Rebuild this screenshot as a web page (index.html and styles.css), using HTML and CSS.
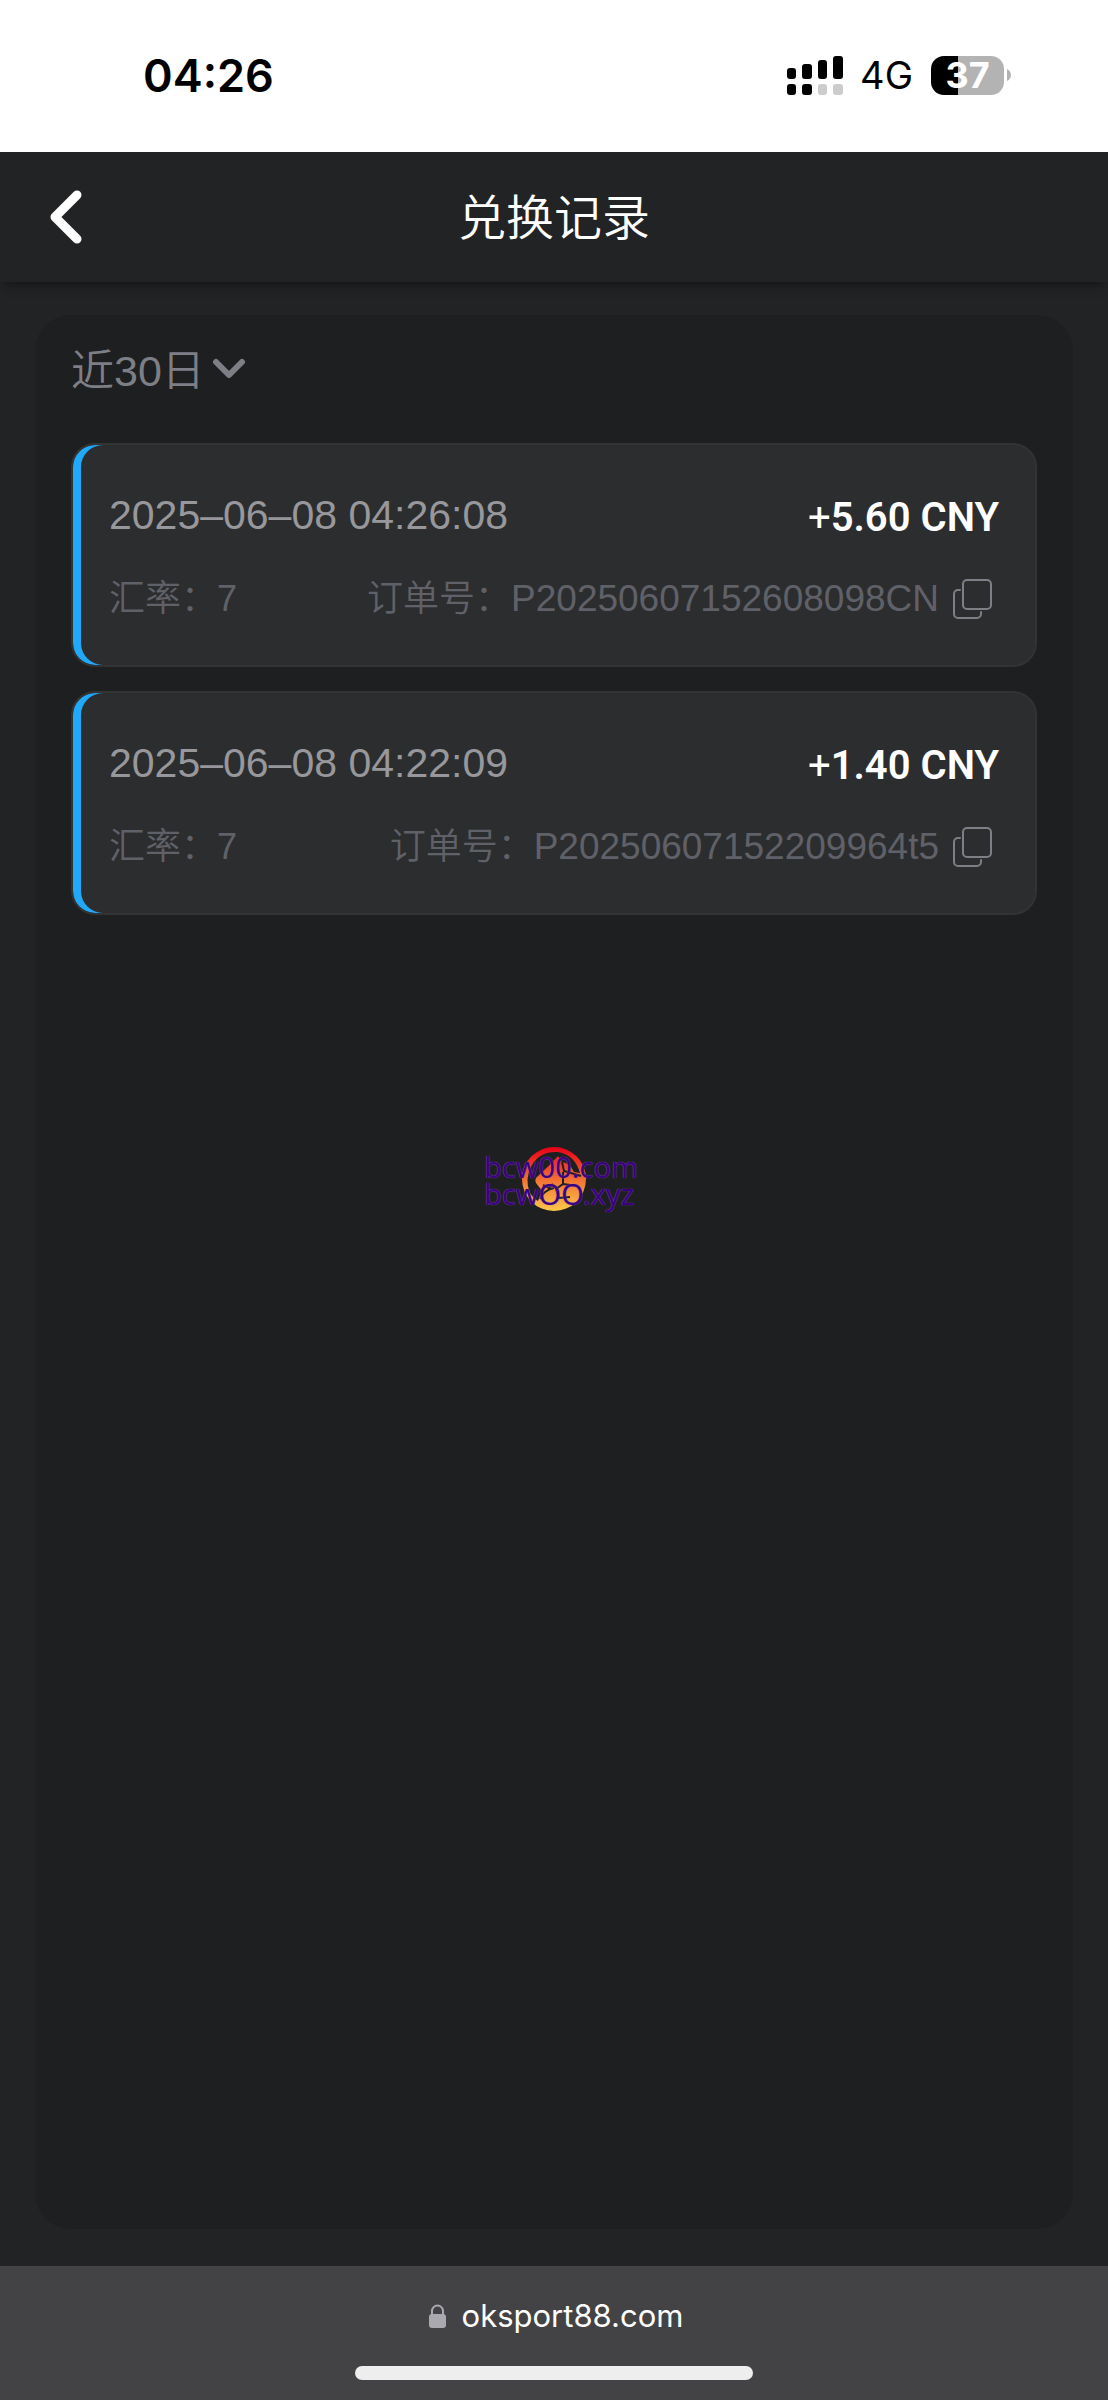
FILE: index.html
```html
<!DOCTYPE html>
<html lang="zh-CN">
<head>
<meta charset="utf-8">
<meta name="viewport" content="width=device-width, initial-scale=1">
<title>兑换记录</title>
<link rel="stylesheet" href="styles.css">
</head>
<body>
<div class="status">
  <span class="status-time">04:26</span>
  <div class="status-right">
    <svg class="signal" viewBox="0 0 56 39" aria-hidden="true">
      <rect x="0" y="12" width="9" height="11" rx="3"/>
      <rect x="15" y="8" width="10" height="15" rx="3"/>
      <rect x="31" y="4" width="9" height="19" rx="3"/>
      <rect x="46" y="0" width="10" height="23" rx="3"/>
      <rect x="0" y="28" width="9" height="11" rx="3"/>
      <rect x="15" y="28" width="10" height="11" rx="3"/>
      <rect class="signal-off" x="31" y="28" width="9" height="11" rx="3"/>
      <rect class="signal-off" x="46" y="28" width="10" height="11" rx="3"/>
    </svg>
    <span class="network">4G</span>
    <div class="battery">
      <span class="battery-body" style="--level: 37%">37</span>
      <svg class="battery-tip" viewBox="0 0 4 12" aria-hidden="true"><path d="M0 0Q4 2 4 6T0 12Z"/></svg>
    </div>
  </div>
</div>

<header class="header">
  <button class="back" type="button" aria-label="返回">
    <svg viewBox="0 0 32 54" aria-hidden="true"><path d="M27 5 5 27 27 49"/></svg>
  </button>
  <h1 class="title">兑换记录</h1>
</header>

<main class="main">
  <section class="panel">
    <label class="filter">
      <select class="filter-select" aria-label="时间范围"><option>近30日</option></select>
      <svg class="filter-arrow" viewBox="0 0 34 22" aria-hidden="true"><path d="M4 4 17 17 30 4"/></svg>
    </label>

    <ul class="records">
      <li class="record">
        <div class="row">
          <time class="date">2025–06–08 04:26:08</time>
          <strong class="amount"><span class="sign">+</span>5.60 CNY</strong>
        </div>
        <div class="row detail">
          <span>汇率：7</span>
          <span class="order">
            <span>订单号：<span class="number">P20250607152608098CN</span></span>
            <button class="copy" type="button" aria-label="复制"><svg viewBox="0 0 42 42" aria-hidden="true"><rect x="12" y="2" width="28" height="29" rx="4"/><path d="M9 12H7a4 4 0 0 0-4 4v20a4 4 0 0 0 4 4h19a4 4 0 0 0 4-4v-2"/></svg></button>
          </span>
        </div>
      </li>
      <li class="record">
        <div class="row">
          <time class="date">2025–06–08 04:22:09</time>
          <strong class="amount"><span class="sign">+</span>1.40 CNY</strong>
        </div>
        <div class="row detail">
          <span>汇率：7</span>
          <span class="order">
            <span>订单号：<span class="number">P20250607152209964t5</span></span>
            <button class="copy" type="button" aria-label="复制"><svg viewBox="0 0 42 42" aria-hidden="true"><rect x="12" y="2" width="28" height="29" rx="4"/><path d="M9 12H7a4 4 0 0 0-4 4v20a4 4 0 0 0 4 4h19a4 4 0 0 0 4-4v-2"/></svg></button>
          </span>
        </div>
      </li>
    </ul>
  </section>
</main>

<div class="watermark">
  <svg class="emblem" viewBox="0 0 64 64" aria-hidden="true">
    <defs>
      <linearGradient id="flame" x1="0" y1="0" x2="0" y2="64" gradientUnits="userSpaceOnUse">
        <stop offset="0" stop-color="#e60019"/>
        <stop offset=".2" stop-color="#ee2a20"/>
        <stop offset=".55" stop-color="#f47a35"/>
        <stop offset="1" stop-color="#fdc748"/>
      </linearGradient>
    </defs>
    <path fill="url(#flame)" fill-rule="evenodd" d="M32 0A32 32 0 1 1 32 64A32 32 0 0 1 32 0ZM10 18Q2 32 8 46Q12 52 16 54Q17 50 21 45L14 36Q12 32 16 29Q26 20 36 9L40 15Q48 16 52 25L58 26Q53 8 36 5Q18 4 10 18Z"/>
    <path class="emblem-line" d="M40 15 42 24 59 29M41 25V37L34 42 37 51 48 50M41 37 56 39M21 38 27 41 31 37M18 52Q22 43 32 41"/>
  </svg>
  <p class="watermark-text">bcw00.com<br>bcwOO.xyz</p>
</div>

<footer class="browser">
  <a class="address" href="#">
    <svg class="lock" viewBox="0 0 17 24" aria-hidden="true"><path d="M3 12V7a5 5 0 0 1 11 0v5"/><rect x="0" y="10" width="17" height="14" rx="3"/></svg>
    oksport88.com
  </a>
  <div class="home"></div>
</footer>
</body>
</html>
```

FILE: styles.css
```css
* {
  box-sizing: border-box;
}

body {
  position: relative;
  display: flex;
  flex-direction: column;
  min-height: 100vh;
  margin: 0;
  background: #222325;
  color: #fff;
  font-family: "Liberation Sans", "Noto Sans CJK SC", sans-serif;
}

button {
  padding: 0;
  border: 0;
  background: none;
  color: inherit;
}

svg {
  display: block;
}

/* Phone status bar */
.status {
  display: flex;
  align-items: center;
  justify-content: space-between;
  height: 152px;
  padding: 0 97px 2px 143px;
  background: #fff;
  color: #000;
  font-family: Inter, sans-serif;
}

.status-time {
  font-size: 45px;
  font-weight: 600;
}

.status-right {
  display: flex;
  align-items: center;
}

.signal {
  width: 56px;
  height: 39px;
}

.signal-off {
  fill: #ccc;
}

.network {
  margin: 0 18px 0 17px;
  font-size: 38px;
  line-height: 40px;
}

.battery {
  display: flex;
  align-items: center;
  gap: 3px;
}

.battery-body {
  width: 73px;
  border-radius: 13px;
  background: linear-gradient(to right, #000 var(--level), #b3b3b3 var(--level));
  color: #fff;
  font-size: 36px;
  font-weight: 700;
  line-height: 39px;
  text-align: center;
}

.battery-tip {
  width: 4px;
  height: 12px;
  fill: #b3b3b3;
}

/* Page header */
.header {
  display: grid;
  grid-template-columns: 80px 1fr 80px;
  align-items: center;
  height: 130px;
  background: #222325;
  box-shadow: 0 8px 8px -4px #17181a;
}

.back {
  width: 32px;
  margin-left: 50px;
}

.back svg {
  width: 32px;
  height: 54px;
  fill: none;
  stroke: #fff;
  stroke-width: 9;
  stroke-linecap: round;
  stroke-linejoin: round;
}

.title {
  margin: 0;
  padding-bottom: 6px;
  font-family: "Noto Sans CJK SC", sans-serif;
  font-size: 48px;
  font-weight: 350;
  line-height: 60px;
  text-align: center;
}

/* Records panel */
.main {
  display: flex;
  flex: 1;
  padding: 33px 35px 37px;
}

.panel {
  flex: 1;
  padding: 24px 36px;
  border-radius: 36px;
  background: #1e1f20;
}

.filter {
  display: inline-flex;
  align-items: center;
  gap: 7px;
  height: 64px;
  color: #7e7f86;
}

.filter-select {
  padding: 0;
  border: 0;
  appearance: none;
  background: none;
  color: inherit;
  font-family: "Liberation Sans", "Noto Sans CJK SC", sans-serif;
  font-size: 43px;
  font-weight: 350;
  line-height: 60px;
}

.filter-arrow {
  width: 34px;
  height: 22px;
  margin-bottom: 4px;
  fill: none;
  stroke: currentColor;
  stroke-width: 6;
  stroke-linecap: round;
  stroke-linejoin: round;
}

.records {
  display: grid;
  gap: 24px;
  margin: 40px 0 0;
  padding: 0;
  list-style: none;
}

.record {
  display: grid;
  gap: 24px;
  padding: 40px 36px 36px;
  border: 2px solid #333;
  border-radius: 24px;
  background: #2c2d2f;
  box-shadow: inset 8px 0 #20a8fa;
}

.row {
  display: flex;
  align-items: center;
  justify-content: space-between;
  height: 60px;
}

.date {
  color: #97979c;
  font-size: 41px;
}

.amount {
  padding-top: 4px;
  font-family: Roboto, sans-serif;
  font-size: 40px;
  font-weight: 600;
}

.sign {
  font-weight: 400;
}

.detail {
  color: #606168;
  font-size: 36px;
  font-weight: 350;
  line-height: 60px;
}

.order {
  display: flex;
  align-items: center;
  gap: 12px;
}

.number {
  font-size: 37px;
}

.copy {
  margin-right: 6px;
  color: #7e7f86;
}

.copy svg {
  width: 42px;
  height: 42px;
  fill: none;
  stroke: currentColor;
  stroke-width: 2;
  stroke-linecap: round;
}

/* Watermark laid over the page */
.watermark {
  position: absolute;
  top: 1147px;
  left: 50%;
  display: grid;
  width: 160px;
  margin-left: -70px;
  pointer-events: none;
}

.emblem {
  grid-area: 1 / 1;
  width: 64px;
  height: 64px;
  margin-left: 38px;
}

.emblem-line {
  fill: none;
  stroke: #1e1f20;
  stroke-width: 2;
}

.watermark-text {
  z-index: 1;
  grid-area: 1 / 1;
  margin: 6px 0 0;
  color: #3a0080;
  font-family: "Noto Sans", sans-serif;
  font-size: 29px;
  line-height: 27px;
  text-shadow: 0 0 1px #9468c0;
}

/* Browser address bar */
.browser {
  display: flex;
  flex-direction: column;
  align-items: center;
  justify-content: space-between;
  height: 134px;
  padding: 30px 0 20px;
  background: #434345;
}

.address {
  display: flex;
  align-items: center;
  gap: 16px;
  padding-left: 4px;
  color: #fff;
  font-family: Inter, sans-serif;
  font-size: 31px;
  line-height: 40px;
  text-decoration: none;
}

.lock {
  width: 17px;
  height: 24px;
  fill: #aaa9b0;
}

.lock path {
  fill: none;
  stroke: #aaa9b0;
  stroke-width: 2;
}

.home {
  width: 36%;
  height: 14px;
  border-radius: 7px;
  background: #eee;
}
```
